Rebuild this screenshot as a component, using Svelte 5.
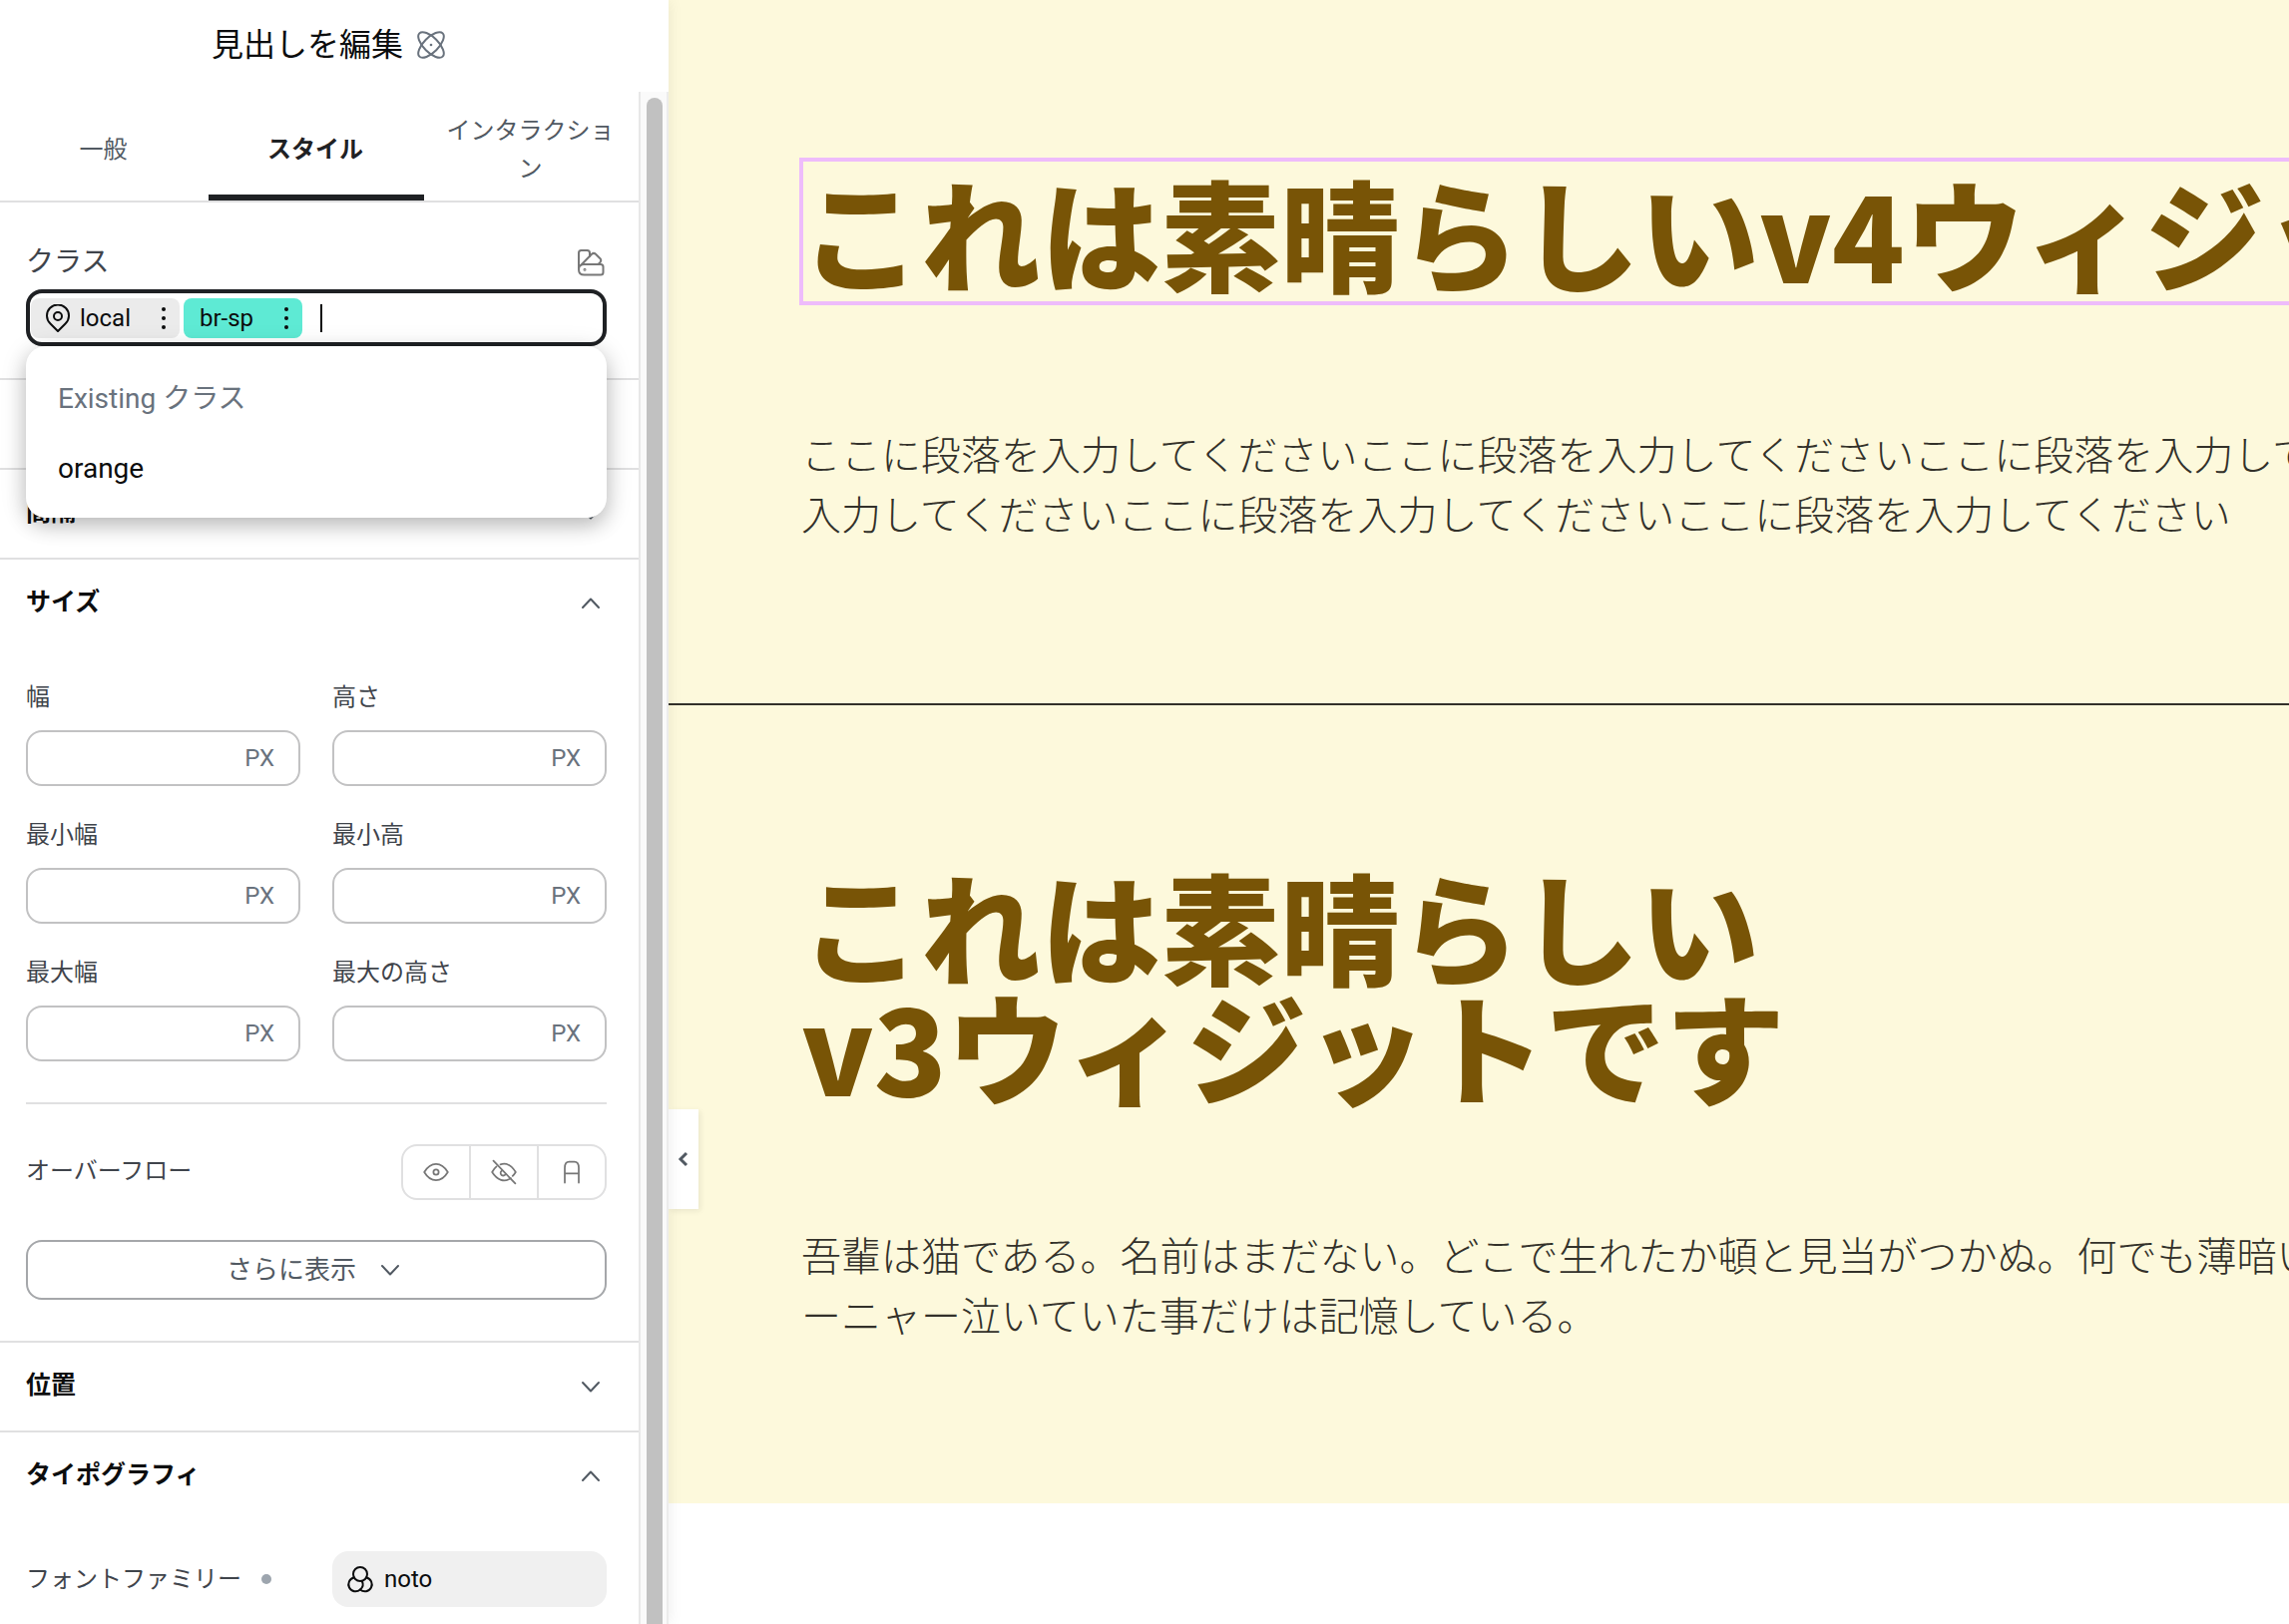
<script>
  let activeTab = $state('スタイル');
  let query = $state('');

  const tabs = ['一般', 'スタイル', 'インタラクション'];

  const sizes = $state([
    { id: 'width', label: '幅', value: '' },
    { id: 'height', label: '高さ', value: '' },
    { id: 'min-width', label: '最小幅', value: '' },
    { id: 'min-height', label: '最小高', value: '' },
    { id: 'max-width', label: '最大幅', value: '' },
    { id: 'max-height', label: '最大の高さ', value: '' }
  ]);
</script>

{#snippet chevron(up)}
  <svg class="chevron" viewBox="0 0 32 32" aria-hidden="true">
    <path d={up ? 'M8 20 16 11.5 24 20' : 'M8 12 16 20.5 24 12'} />
  </svg>
{/snippet}

{#snippet dots()}
  <svg class="dots" viewBox="0 0 8 24" aria-hidden="true">
    <circle cx="4" cy="3" r="2" />
    <circle cx="4" cy="12" r="2" />
    <circle cx="4" cy="21" r="2" />
  </svg>
{/snippet}

{#snippet sectionHead(title, open)}
  <h2 class="section-head">
    <button type="button" aria-expanded={open}>
      <span>{title}</span>
      {@render chevron(open)}
    </button>
  </h2>
{/snippet}

<div class="editor">
  <aside class="panel">
    <header class="panel-header">
      <h1>見出しを編集</h1>
      <svg class="atom" viewBox="0 0 40 40" aria-hidden="true">
        <ellipse cx="20" cy="20" rx="16.5" ry="7.4" transform="rotate(45 20 20)" />
        <ellipse cx="20" cy="20" rx="16.5" ry="7.4" transform="rotate(-45 20 20)" />
        <circle class="core" cx="20" cy="20" r="1.3" />
      </svg>
    </header>

    <div class="panel-body">
      <div class="controls">
        <div class="tabs" role="tablist">
          {#each tabs as tab}
            <button
              type="button"
              role="tab"
              class="tab"
              class:active={tab === activeTab}
              aria-selected={tab === activeTab}
              onclick={() => (activeTab = tab)}>{tab}</button>
          {/each}
        </div>

        <section class="section classes">
          <div class="classes-head">
            <label for="class-input">クラス</label>
            <button type="button" class="swatch" aria-label="クラスマネージャー">
              <svg viewBox="0 0 32 32" aria-hidden="true">
                <path d="M4 22V6.500Q4 4 6.500 4H12.500Q15 4 15 6.500V10" />
                <path d="M6.500 18.500 17 7.800Q19 6 21 7.800L25.500 12.200Q27 14 25.500 15.800L23.500 18" />
                <path d="M9.500 18H26Q28.500 18 28.500 20.500V26Q28.500 28.500 26 28.500H9.500Q4 28.500 4 23.200T9.500 18Z" />
                <circle cx="10" cy="23.300" r=".5" />
              </svg>
            </button>
          </div>
          <div class="combo">
            <div class="class-box">
              <span class="chip">
                <svg class="pin" viewBox="0 0 24 28" aria-hidden="true">
                  <circle cx="12" cy="12" r="4" />
                  <path d="M12 27 4.500 19.500A11 11 0 1 1 19.500 19.500Z" />
                </svg>
                <span>local</span>
                <button type="button" aria-label="local メニュー">{@render dots()}</button>
              </span>
              <span class="chip global">
                <span>br-sp</span>
                <button type="button" aria-label="br-sp メニュー">{@render dots()}</button>
              </span>
              <span class="caret"></span>
              <input id="class-input" type="text" autocomplete="off" bind:value={query} />
            </div>
            <ul class="menu">
              <li class="menu-title">Existing クラス</li>
              <li><button type="button">orange</button></li>
            </ul>
          </div>
        </section>

        <section class="section">
          {@render sectionHead('', false)}
        </section>

        <section class="section">
          {@render sectionHead('間隔', false)}
        </section>

        <section class="section">
          {@render sectionHead('サイズ', true)}
          <div class="section-content">
            <div class="size-grid">
              {#each sizes as size}
                <div class="field">
                  <label for={size.id}>{size.label}</label>
                  <div class="unit-input">
                    <input id={size.id} type="text" bind:value={size.value} />
                    <button type="button">PX</button>
                  </div>
                </div>
              {/each}
            </div>

            <hr />

            <div class="row">
              <span class="label">オーバーフロー</span>
              <div class="toggles">
                <button type="button" aria-label="表示">
                  <svg viewBox="0 0 32 32" aria-hidden="true">
                    <circle cx="16" cy="16" r="3" />
                    <path d="M2.500 16C10 3.500 22 3.500 29.500 16C22 28.500 10 28.500 2.500 16Z" />
                  </svg>
                </button>
                <button type="button" aria-label="非表示">
                  <svg viewBox="0 0 32 32" aria-hidden="true">
                    <path d="M13.500 14.500A3 3 0 1 0 18 18" />
                    <path d="M7.500 9.500Q4.500 12 2.500 16C8.500 25.500 16.500 28 24 23" />
                    <path d="M12 7.200C19 5 25 8.500 29.500 16Q28 18.500 26 20.500" />
                    <path d="M4 3 29 29" />
                  </svg>
                </button>
                <button type="button" aria-label="自動">
                  <svg viewBox="0 0 32 32" aria-hidden="true">
                    <path d="M8 28V11Q8 4 13 4H19Q24 4 24 11V28M8 17.500H24" />
                  </svg>
                </button>
              </div>
            </div>

            <button type="button" class="more">
              <span>さらに表示</span>
              {@render chevron(false)}
            </button>
          </div>
        </section>

        <section class="section">
          {@render sectionHead('位置', false)}
        </section>

        <section class="section">
          {@render sectionHead('タイポグラフィ', true)}
          <div class="section-content">
            <div class="half-row">
              <span class="label">フォントファミリー <i class="changed"></i></span>
              <button type="button" class="variable">
                <svg viewBox="0 0 28 28" aria-hidden="true">
                  <circle cx="14" cy="9" r="7" />
                  <path d="M7.800 12.500A7 7 0 1 0 14 24.500A7 7 0 0 0 15.800 16" />
                  <path d="M14 24.500A7 7 0 1 0 20.200 12.500" />
                </svg>
                <span>noto</span>
              </button>
            </div>
          </div>
        </section>
      </div>

      <div class="scrollbar"><div class="thumb"></div></div>
    </div>
  </aside>

  <main class="canvas">
    <section class="block first">
      <h2 class="selected">これは素晴らしいv4ウィジットです</h2>
      <p>
        ここに段落を入力してくださいここに段落を入力してくださいここに段落を入力してくださいここに段落を<br />入力してくださいここに段落を入力してくださいここに段落を入力してください
      </p>
    </section>
    <section class="block second">
      <h2>これは素晴らしい<br />v3ウィジットです</h2>
      <p>
        吾輩は猫である。名前はまだない。どこで生れたか頓と見当がつかぬ。何でも薄暗いじめじめした所でニャ<br />ーニャー泣いていた事だけは記憶している。
      </p>
    </section>
    <button type="button" class="collapse" aria-label="パネルを隠す">
      <svg viewBox="0 0 12 20" aria-hidden="true"><path d="M9 4 3 10 9 16" /></svg>
    </button>
  </main>
</div>

<style>
  :global(body) {
    margin: 0;
    background: #fff;
  }

  .editor {
    display: grid;
    grid-template-columns: 670px 1fr;
    height: 100vh;
    overflow: hidden;
    font-family: Roboto, 'Noto Sans CJK JP', sans-serif;
    font-size: 24px;
    line-height: 38px;
    color: #3f444b;
  }

  button,
  input {
    margin: 0;
    padding: 0;
    border: 0;
    background: none;
    font: inherit;
    color: inherit;
  }

  input {
    min-width: 0;
    outline: none;
  }

  svg {
    flex: none;
    display: block;
    fill: none;
    stroke: currentColor;
    stroke-width: 2;
    stroke-linecap: round;
    stroke-linejoin: round;
  }

  /* panel */
  .panel {
    display: flex;
    flex-direction: column;
    min-height: 0;
    background: #fff;
    position: relative;
    z-index: 1;
    box-shadow: 0 0 14px rgba(0, 0, 0, 0.08);
  }

  .panel-header {
    flex: none;
    display: flex;
    align-items: center;
    justify-content: center;
    gap: 8px;
    height: 92px;
    padding: 0 6px 2px 0;
    box-sizing: border-box;
  }

  .panel-header h1 {
    margin: 0;
    font-size: 32px;
    font-weight: 400;
    color: #0c0d0e;
  }

  .atom {
    width: 40px;
    height: 40px;
    color: #69727d;
  }

  .atom .core {
    fill: currentColor;
    stroke: none;
  }

  .panel-body {
    flex: 1;
    min-height: 0;
    display: flex;
  }

  .controls {
    flex: 1;
    min-width: 0;
    overflow: hidden;
  }

  .scrollbar {
    width: 16px;
    padding: 6px 4px 0 6px;
    background: #fafafa;
    border-left: 2px solid #e8e8e8;
    border-right: 2px solid #ececec;
  }

  .thumb {
    width: 16px;
    height: 100%;
    border-radius: 8px 8px 0 0;
    background: #c1c1c1;
  }

  .tabs {
    display: grid;
    grid-template-columns: 209fr 216fr 215fr;
    height: 109px;
    border-bottom: 2px solid #e0e0e1;
  }

  .tab {
    padding: 12px 21px 0 19px;
    border-bottom: 6px solid transparent;
    color: #515962;
  }

  .tab.active {
    border-color: #1f2124;
    color: #1f2124;
    font-weight: 700;
  }

  .section {
    border-bottom: 2px solid #e0e0e1;
  }

  .section-head {
    margin: 0;
    font-size: 25px;
    font-weight: 700;
    color: #0c0d0e;
  }

  .section-head button {
    display: flex;
    align-items: center;
    justify-content: space-between;
    width: 100%;
    height: 88px;
    padding: 0 32px 0 26px;
    text-align: left;
  }

  .section-head span {
    padding-bottom: 3px;
  }

  .chevron {
    width: 32px;
    height: 32px;
    color: #515962;
  }

  .section-content {
    padding: 31px 32px 41px 26px;
  }

  /* classes */
  .classes {
    padding: 40px 32px 32px 26px;
  }

  .classes-head {
    display: flex;
    align-items: center;
    justify-content: space-between;
    height: 40px;
    margin-bottom: 7px;
    font-size: 28px;
    line-height: 40px;
  }

  .swatch svg {
    width: 32px;
    height: 32px;
    color: #777;
  }

  .combo {
    position: relative;
  }

  .class-box {
    display: flex;
    align-items: center;
    gap: 4px;
    height: 57px;
    padding: 0 1px;
    box-sizing: border-box;
    border: 4px solid #1f2124;
    border-radius: 16px;
  }

  .chip {
    display: flex;
    align-items: center;
    gap: 10px;
    height: 40px;
    padding: 0 12px 0 15px;
    border-radius: 8px;
    background: #ebebeb;
    color: #0c0d0e;
  }

  .chip.global {
    padding-left: 16px;
    background: #5eead4;
  }

  .chip button {
    padding-left: 19px;
  }

  .pin {
    width: 24px;
    height: 28px;
  }

  .dots {
    width: 8px;
    height: 24px;
    fill: currentColor;
    stroke: none;
  }

  .caret {
    width: 2px;
    height: 28px;
    margin-left: 14px;
    background: #0c0d0e;
  }

  .class-box input {
    flex: 1;
  }

  .menu {
    position: absolute;
    top: 57px;
    left: 0;
    right: 0;
    z-index: 2;
    margin: 0;
    padding: 18px 0 14px;
    list-style: none;
    border-radius: 20px;
    background: #fff;
    color: #0c0d0e;
    font-size: 28px;
    line-height: 70px;
    box-shadow: 0 8px 20px rgba(0, 0, 0, 0.2), 0 4px 28px rgba(0, 0, 0, 0.12);
  }

  .menu li {
    height: 70px;
    padding: 0 32px;
  }

  .menu-title {
    color: #69727d;
  }

  /* size */
  .size-grid {
    display: grid;
    grid-template-columns: repeat(2, minmax(0, 1fr));
    gap: 30px 32px;
  }

  .field label {
    display: block;
    margin-bottom: 14px;
  }

  .unit-input {
    display: flex;
    align-items: center;
    height: 56px;
    padding: 0 24px;
    box-sizing: border-box;
    border: 2px solid #c2c2c3;
    border-radius: 16px;
  }

  .unit-input input {
    flex: 1;
  }

  .unit-input button {
    color: #69727d;
  }

  hr {
    height: 2px;
    margin: 41px 0 40px;
    border: 0;
    background: #e0e0e1;
  }

  .row {
    display: flex;
    align-items: center;
    justify-content: space-between;
  }

  .row .label {
    padding-bottom: 2px;
  }

  .toggles {
    display: flex;
    width: 206px;
    height: 56px;
    box-sizing: border-box;
    border: 2px solid #e0e0e1;
    border-radius: 16px;
  }

  .toggles button {
    flex: 1;
    display: flex;
    align-items: center;
    justify-content: center;
    color: #777;
  }

  .toggles button + button {
    border-left: 2px solid #e0e0e1;
  }

  .toggles svg {
    width: 32px;
    height: 28px;
  }

  .more {
    display: flex;
    align-items: center;
    justify-content: center;
    gap: 18px;
    width: 100%;
    height: 60px;
    margin-top: 40px;
    border: 2px solid #a5a7aa;
    border-radius: 16px;
    color: #515962;
    font-size: 26px;
  }

  .half-row {
    display: grid;
    grid-template-columns: repeat(2, minmax(0, 1fr));
    align-items: center;
    gap: 32px;
  }

  .half-row .label {
    display: flex;
    align-items: center;
    gap: 20px;
    white-space: nowrap;
  }

  .changed {
    width: 10px;
    height: 10px;
    border-radius: 50%;
    background: #9da5ae;
  }

  .variable {
    display: flex;
    align-items: center;
    gap: 10px;
    height: 56px;
    padding: 0 14px;
    border-radius: 16px;
    background: #f0f0f0;
    color: #0c0d0e;
  }

  .variable svg {
    width: 28px;
    height: 28px;
  }

  /* canvas */
  .canvas {
    position: relative;
    min-width: 0;
    overflow: hidden;
    font-family: 'Noto Sans CJK JP', sans-serif;
    white-space: nowrap;
  }

  .block {
    padding: 0 133px;
    background: #fdf9dc;
  }

  .first {
    padding-top: 160px;
    padding-bottom: 161px;
    border-bottom: 2px solid #33312a;
  }

  .second {
    padding-top: 160px;
    padding-bottom: 160px;
  }

  .block h2 {
    width: max-content;
    margin: 0;
    font-size: 120px;
    font-weight: 900;
    line-height: 120px;
    color: #785406;
  }

  .block h2.selected {
    padding: 12px 0;
    outline: 4px solid #eebcfb;
    outline-offset: -2px;
  }

  .block p {
    margin: 120px 0 0;
    font-size: 40px;
    font-weight: 300;
    line-height: 60px;
    color: #33312a;
  }

  .collapse {
    position: absolute;
    top: 1112px;
    left: 0;
    display: flex;
    align-items: center;
    justify-content: center;
    width: 30px;
    height: 100px;
    background: #fff;
    color: #515962;
    box-shadow: 2px 2px 6px rgba(0, 0, 0, 0.08);
  }

  .collapse svg {
    width: 12px;
    height: 20px;
    stroke-width: 3;
    stroke-linecap: butt;
    stroke-linejoin: miter;
  }
</style>
